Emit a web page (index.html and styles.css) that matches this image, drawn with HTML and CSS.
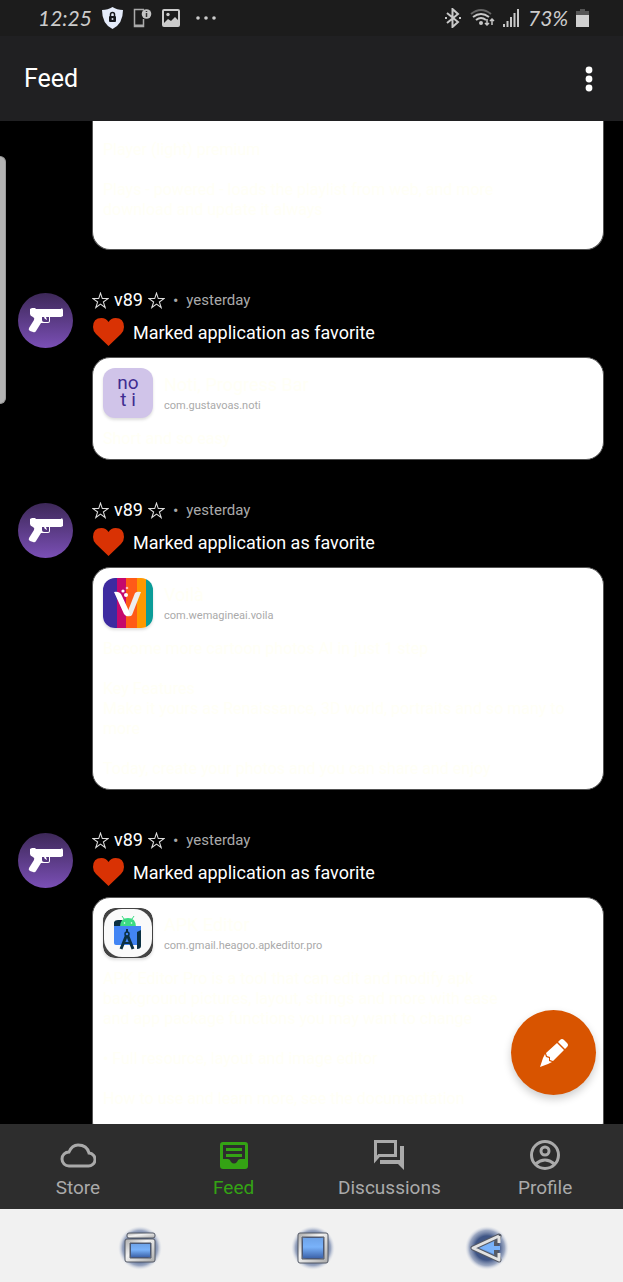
FILE: index.html
```html
<!DOCTYPE html>
<html lang="en">
<head>
<meta charset="utf-8">
<meta name="viewport" content="width=device-width, initial-scale=1">
<title>Feed</title>
<link rel="stylesheet" href="styles.css">
</head>
<body>
<svg class="defs" aria-hidden="true">
  <defs>
    <linearGradient id="purple" x1="0" y1="0" x2="0" y2="1"><stop offset="0" stop-color="#3d2858"/><stop offset="1" stop-color="#7a4fb5"/></linearGradient>
    <linearGradient id="screen" x1="0" y1="0" x2="0" y2="1"><stop offset="0" stop-color="#6ea3e8"/><stop offset=".45" stop-color="#79b2fa"/><stop offset="1" stop-color="#3d64ab"/></linearGradient>
    <linearGradient id="metal" x1="0" y1="0" x2="1" y2="1"><stop offset="0" stop-color="#aaa"/><stop offset=".4" stop-color="#f2f2f2"/><stop offset="1" stop-color="#aaa"/></linearGradient>
    <radialGradient id="glow"><stop offset=".55" stop-color="#3f5585"/><stop offset=".8" stop-color="#7788ad" stop-opacity=".7"/><stop offset="1" stop-color="#d5dbe8" stop-opacity="0"/></radialGradient>
    <symbol id="avatar" viewBox="0 0 55 55">
      <circle cx="27.500" cy="27.500" r="27.500" fill="url(#purple)"/>
      <path fill="#fff" d="M12 16l2-1h3l1 1h25l1-1 1 2v6l-2 1H32v4q0 2-2 2h-7l-5 8q-1 2-3 1l-3-1q-2-1-1-3l5-8q1-2-1-3-3-1-3-3z"/>
      <path fill="#55377f" d="M24 24h2q0 2 3 3l-1-3h3v4q0 1-1 1h-4q-2 0-2-2z"/>
    </symbol>
    <symbol id="heart" viewBox="0 0 31 28"><path fill="#d93204" d="M15.500 28L3 16Q0 13 0 9 0 0 8.500 0 13 0 15.500 4 18 0 22.500 0 31 0 31 9q0 4-3 7z"/></symbol>
    <symbol id="star" viewBox="0 0 16 16"><path d="M8 1l1.700 5.200H15l-4.300 3.200 1.700 5.200L8 11.400l-4.400 3.200 1.700-5.200L1 6.200h5.300z"/></symbol>
  </defs>
</svg>

<div class="statusbar">
  <div class="status-left">
    <span class="status-text">12:25</span>
    <svg width="21" height="22" viewBox="0 0 21 22"><path fill="#e5ecfb" d="M10.500 0Q15 3 21 3 21 17 10.500 22 0 17 0 3 6 3 10.500 0z"/><rect x="7" y="9" width="7" height="6" rx="1" fill="#15181d"/><path d="M8.500 9V7.500a2 2 0 0 1 4 0V9" fill="none" stroke="#15181d" stroke-width="1.500"/><circle cx="10.500" cy="12" r="1" fill="#d5dbe8"/></svg>
    <svg width="19" height="20" viewBox="0 0 19 20"><path d="M11 1.500H1.500v17h9V11" fill="none" stroke="#aaa" stroke-width="1.500"/><path d="M1 17.500h10" stroke="#aaa" stroke-width="2"/><circle cx="13.500" cy="6" r="4.800" fill="#c4c4c4"/><path d="M13.500 5v4M13.500 3v1" stroke="#333" stroke-width="1.500"/></svg>
    <svg width="18" height="18" viewBox="0 0 18 18"><path fill="#cbcbcb" fill-rule="evenodd" d="M2 0h14q2 0 2 2v14q0 2-2 2H2q-2 0-2-2V2q0-2 2-2zm0 2v12l4-4 3 2 4-4 3 3V2z"/><circle cx="6" cy="5.500" r="1.700" fill="#cbcbcb"/></svg>
    <svg class="more-status" width="22" height="4" viewBox="0 0 22 4" fill="#ccc"><circle cx="3" cy="2" r="1.800"/><circle cx="11" cy="2" r="1.800"/><circle cx="19" cy="2" r="1.800"/></svg>
  </div>
  <div class="status-right">
    <svg width="18" height="20" viewBox="0 0 18 20" fill="none" stroke="#c8c8c8" stroke-width="2"><path d="M3 5l11 9-5.500 5V1L14 6 3 15"/><path d="M1 10h2M15 10h2"/></svg>
    <svg width="25" height="20" viewBox="0 0 25 20" fill="none" stroke="#c8c8c8" stroke-width="2"><path stroke="#666" d="M1 6q10-8 20 0"/><path d="M3 9q8-6 16 0M6 12q5-4 10 0"/><circle cx="11" cy="15" r="1" fill="#ccc"/><path stroke-width="1.500" d="M17 11v6m-2-2 2 2 2-2M22 17v-6m-2 2 2-2 2 2"/></svg>
    <svg width="17" height="18" viewBox="0 0 17 18" fill="#c8c8c8"><path d="M0 15h2v3H0zM3.500 12h2v6h-2zM7 8h2v10H7zM10.500 4h2v14h-2zM14 0h2v18h-2z"/></svg>
    <span class="status-text">73%</span>
    <svg width="13" height="18" viewBox="0 0 13 18"><path fill="#555" d="M4 0h5v2h4v6H0V2h4z"/><path fill="#d0d0d0" d="M0 6h13v12H0z"/></svg>
  </div>
</div>

<header class="appbar">
  <h1>Feed</h1>
  <button class="menu" aria-label="More options"><svg width="8" height="26" viewBox="0 0 8 26" fill="#fff"><circle cx="4" cy="4" r="3.400"/><circle cx="4" cy="13" r="3.400"/><circle cx="4" cy="22" r="3.400"/></svg></button>
</header>

<main class="main">
  <div class="feed">
    <article class="post post-scrolled">
      <div class="card"><p class="description">Player (light) premium

Plays - powered - loads the playlist from web, and more
download and update it always</p></div>
    </article>

    <article class="post">
      <svg class="avatar"><use href="#avatar"/></svg>
      <div class="content">
        <div class="author"><svg class="star"><use href="#star"/></svg><span class="name">v89</span><svg class="star"><use href="#star"/></svg><span class="dot">•</span><time>yesterday</time></div>
        <div class="action"><svg class="heart"><use href="#heart"/></svg><span>Marked application as favorite</span></div>
        <div class="card">
          <div class="app">
            <div class="app-icon icon-noti"><span>no</span><span>t i</span></div>
            <div class="app-info"><h2>Noti, Progress Bar</h2><span>com.gustavoas.noti</span></div>
          </div>
          <p class="description">Short and so easy</p>
        </div>
      </div>
    </article>

    <article class="post">
      <svg class="avatar"><use href="#avatar"/></svg>
      <div class="content">
        <div class="author"><svg class="star"><use href="#star"/></svg><span class="name">v89</span><svg class="star"><use href="#star"/></svg><span class="dot">•</span><time>yesterday</time></div>
        <div class="action"><svg class="heart"><use href="#heart"/></svg><span>Marked application as favorite</span></div>
        <div class="card">
          <div class="app">
            <svg class="app-icon" viewBox="0 0 50 50"><path fill="#3d2aa0" d="M0 0h14v50H0z"/><path fill="#c5086c" d="M14 0h9v50h-9z"/><path fill="#ff5a18" d="M23 0h11v50H23z"/><path fill="#ff9800" d="M34 0h9v50h-9z"/><path fill="#0b9c98" d="M43 0h7v50h-7z"/><path fill="#eee" d="M32 15q2-2 6-1L29 37q-1 2-6 1z"/><path fill="#fff" d="M11 14q6-1 8 4l6 13 2 5q-3 4-6 0z"/><circle cx="20" cy="13" r="1.600" fill="#fff"/><circle cx="23" cy="17" r="2" fill="#fff"/><circle cx="24" cy="10" r="1.300" fill="#fbb"/></svg>
            <div class="app-info"><h2>Voilà</h2><span>com.wemagineai.voila</span></div>
          </div>
          <p class="description">Become more cartoon photos AI in just 1 step

Key Features
Make it yours as Renaissance, 3D world, portraits and so many to
more

Today, create your photos and you can share and enjoy</p>
        </div>
      </div>
    </article>

    <article class="post">
      <svg class="avatar"><use href="#avatar"/></svg>
      <div class="content">
        <div class="author"><svg class="star"><use href="#star"/></svg><span class="name">v89</span><svg class="star"><use href="#star"/></svg><span class="dot">•</span><time>yesterday</time></div>
        <div class="action"><svg class="heart"><use href="#heart"/></svg><span>Marked application as favorite</span></div>
        <div class="card card-long">
          <div class="app">
            <svg class="app-icon" viewBox="0 0 50 50"><rect width="50" height="50" rx="12" fill="#444"/><rect x="1" y="1" width="48" height="48" rx="18" fill="#fafafa"/><path fill="#0b3042" d="M11 14q1-2 4-2h4v8h-8z"/><path fill="#3ddc84" d="M17 19q0-9 8-9t8 9z"/><path stroke="#3ddc84" d="M21 11l-2-3M29 11l2-3"/><circle cx="21.500" cy="15" r=".8" fill="#fff"/><circle cx="28.500" cy="15" r=".8" fill="#fff"/><path fill="#4285f4" d="M11 18h27v17q0 2-2 2H13q-2 0-2-2z"/><path fill="none" stroke="#0b3042" stroke-width="3" d="M24 26l-6 15M24 26l6 15"/><path stroke="#0b3042" stroke-width="2" d="M20 35h8M24 21v4"/><circle cx="24" cy="26" r="2" fill="#4285f4" stroke="#0b3042" stroke-width="1.500"/><path fill="#0b3042" d="M34 24l4-2v16q0 3-4 3z"/></svg>
            <div class="app-info"><h2>APK Editor</h2><span>com.gmail.heagoo.apkeditor.pro</span></div>
          </div>
          <p class="description">APK Editor Pro is a tool that can edit and modify apk
background pictures, layout, strings and more with ease
and app package functions you may want to change

• Full resource, layout and image editor

How to use and learn more, see the documentation</p>
        </div>
      </div>
    </article>
  </div>
  <div class="edge-handle"></div>
  <button class="compose" aria-label="New post"><svg width="30" height="30" viewBox="0 0 30 30" fill="#fff"><path d="M18 5l7 7-11 11-3-1 0-3-3-1-1-3z"/><path d="M19 4l2-2q2-2 4 0l3 3q2 2 0 4l-2 2z"/><path d="M6 16l1 3 3 1 0 3 3 1-4 2-8 3 3-9z"/></svg></button>
</main>

<nav class="tabs">
  <a href="#store"><svg viewBox="0 0 36 30"><path d="M9 26a7 7 0 0 1 0-14Q12 5 18 5q9 0 11 8a6.500 6.500 0 0 1-1 13z" fill="none" stroke="#aaa" stroke-width="3"/></svg><span>Store</span></a>
  <a href="#feed" class="active" aria-current="page"><svg viewBox="0 0 36 30"><path fill="#34a314" fill-rule="evenodd" d="M7 2h22q3 0 3 3v21q0 3-3 3H7q-3 0-3-3V5q0-3 3-3zm0 3v14h5q2 0 3 3 3 3 6 0 1-3 3-3h5V5z"/><path stroke="#34a314" stroke-width="3" d="M10 9.500h16M10 15.500h16"/></svg><span>Feed</span></a>
  <a href="#discussions"><svg viewBox="0 0 36 30"><path fill="none" stroke="#aaa" stroke-width="3" d="M4.500 1.500h20v14H8l-3.500 4z"/><path fill="#aaa" d="M29 6h4v24l-6-6H9v-4h20z"/></svg><span>Discussions</span></a>
  <a href="#profile"><svg viewBox="0 0 36 30"><g fill="none" stroke="#aaa" stroke-width="3"><circle cx="18" cy="15" r="13.500"/><circle cx="18" cy="11" r="4"/><path d="M8.500 24q9.500-8 19 0"/></g></svg><span>Profile</span></a>
</nav>

<div class="system-nav">
  <button aria-label="Recent apps"><svg viewBox="0 0 44 44"><circle cx="22" cy="22" r="22" fill="url(#glow)"/><g stroke="#555a66" fill="url(#metal)"><rect x="9" y="7" width="28" height="5" rx="2"/><path fill-rule="evenodd" d="M9 13h26q2 0 2 2v19q0 2-2 2H9q-2 0-2-2V15q0-2 2-2zm3 4v15h21V17z"/></g><path fill="url(#screen)" d="M13 18h19v13H13z"/></svg></button>
  <button aria-label="Home"><svg viewBox="0 0 44 44"><circle cx="22" cy="22" r="22" fill="url(#glow)"/><path stroke="#555a66" fill="url(#metal)" fill-rule="evenodd" d="M9 7h26q2 0 2 2v26q0 2-2 2H9q-2 0-2-2V9q0-2 2-2zm2 4v22h22V11z"/><path fill="url(#screen)" d="M12 12h20v20H12z"/></svg></button>
  <button aria-label="Back"><svg viewBox="0 0 44 44"><circle cx="22" cy="22" r="22" fill="url(#glow)"/><path d="M34 10L8 22l26 12-3-8v-8z" fill="url(#screen)" stroke="#555a66" stroke-width="5" stroke-linejoin="round"/><path d="M34 10L8 22l26 12v-7M34 17v-7" fill="none" stroke="#e2e2e2" stroke-width="3" stroke-linejoin="round"/><path fill="#79b2fa" d="M16 22l13-6v4h6v4h-6v4z"/></svg></button>
</div>
</body>
</html>
```
FILE: styles.css
```css
* { box-sizing: border-box; }

body {
  margin: 0;
  height: 100vh;
  display: flex;
  flex-direction: column;
  background: #000;
  color: #fff;
  font-family: Roboto, "Liberation Sans", sans-serif;
}

h1, h2, p { margin: 0; font-weight: 400; }
button { border: 0; padding: 0; background: none; display: grid; place-items: center; }
svg { flex: none; }
.defs { position: absolute; width: 0; height: 0; }

.statusbar {
  flex: none;
  height: 36px;
  padding: 0 34px 0 38px;
  display: flex;
  align-items: center;
  justify-content: space-between;
  background: #1c1c1c;
}
.status-left, .status-right { display: flex; align-items: center; gap: 10px; }
.status-right { gap: 8px; }
.status-text {
  color: #ccc;
  font: italic 400 21px/24px Lato, sans-serif;
}
.more-status { margin-left: 5px; }

.appbar {
  flex: none;
  height: 85px;
  padding: 0 24px;
  display: flex;
  align-items: center;
  justify-content: space-between;
  background: #202022;
}
.appbar h1 { font-size: 25px; line-height: 32px; }
.menu { width: 20px; height: 40px; }

.main { position: relative; flex: 1; min-height: 0; }
.feed { height: 100%; overflow: hidden; }

.post {
  display: flex;
  gap: 19px;
  padding: 39px 19px 0 18px;
}
.post-scrolled { padding: 0 19px 0 92px; }
.post-scrolled .card {
  flex: 1;
  border-top: 0;
  border-radius: 0 0 18px 18px;
  padding: 19px 10px 29px;
}
.avatar { width: 55px; height: 55px; margin-top: 4px; }
.content { flex: 1; min-width: 0; }

.author { display: flex; align-items: center; height: 22px; gap: 5px; }
.star { width: 17px; height: 17px; fill: none; stroke: #ddd; stroke-width: 1; }
.name { font-size: 18px; line-height: 22px; }
.dot { color: #aaa; font-size: 16px; margin: 0 3px; }
.author time { color: #aaa; font-size: 15px; line-height: 20px; }

.action { display: flex; align-items: center; gap: 9px; height: 42px; padding-left: 1px; font-size: 18px; }
.heart { width: 31px; height: 28px; }

.card {
  margin-top: 4px;
  padding: 10px;
  border: 1px solid #555;
  border-radius: 18px;
  background: #fff;
  color: #fffff6;
}
.card-long { padding-bottom: 30px; }
.post-scrolled .card { margin-top: 0; }
.app { display: flex; gap: 11px; }
.app-icon { width: 50px; height: 50px; border-radius: 12px; box-shadow: 0 2px 3px #0002; }
.icon-noti {
  display: flex;
  flex-direction: column;
  align-items: center;
  justify-content: center;
  background: #d0c4e9;
  color: #3f2d91;
  font-size: 19px;
  line-height: 17px;
  padding-bottom: 4px;
  white-space: pre;
}
.app-info { display: flex; flex-direction: column; gap: 2px; padding-top: 6px; }
.app-info h2 { font-size: 18px; line-height: 22px; }
.app-info span { color: #aaa; font-size: 11px; line-height: 16px; }
.description { margin-top: 11px; font-size: 16px; line-height: 20px; white-space: pre-line; }
.post-scrolled .description { margin-top: 0; }

.edge-handle {
  position: absolute;
  top: 35px;
  left: 0;
  width: 6px;
  height: 248px;
  background: #b3b3b3;
  border: 1px solid #999;
  border-left: 0;
  border-radius: 0 6px 6px 0;
}

.compose {
  position: absolute;
  right: 27px;
  bottom: 29px;
  width: 85px;
  height: 85px;
  border-radius: 50%;
  background: #d85400;
  box-shadow: 0 4px 8px #0003;
}

.tabs {
  flex: none;
  height: 85px;
  display: grid;
  grid-template-columns: repeat(4, 1fr);
  background: #2d2d2d;
}
.tabs a {
  display: flex;
  flex-direction: column;
  align-items: center;
  gap: 6px;
  padding-top: 16px;
  color: #aaa;
  font-size: 19px;
  line-height: 24px;
  text-decoration: none;
}
.tabs svg { width: 36px; height: 30px; }
.tabs .active { color: #34a314; }

.system-nav {
  flex: none;
  height: 73px;
  padding: 4px 49px 0 53px;
  display: grid;
  grid-template-columns: repeat(3, 1fr);
  align-items: center;
  background: #f1f1f1;
}
.system-nav svg { width: 44px; height: 44px; }
```
